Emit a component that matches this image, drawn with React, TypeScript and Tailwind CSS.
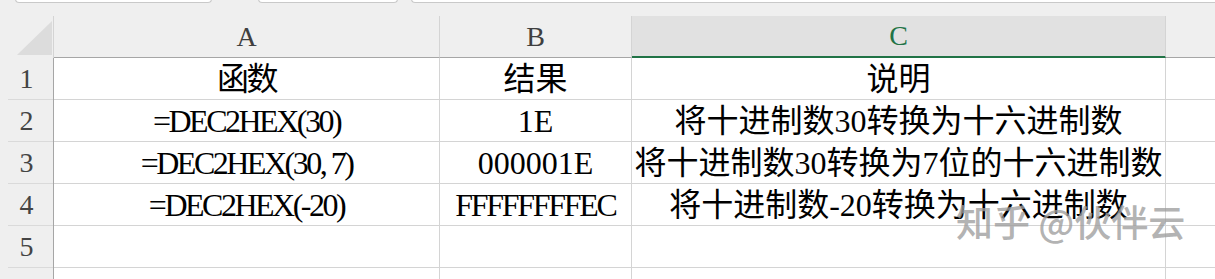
const rows: { a: string; b: string; c: string }[] = [
  { a: "函数", b: "结果", c: "说明" },
  { a: "=DEC2HEX(30)", b: "1E", c: "将十进制数30转换为十六进制数" },
  { a: "=DEC2HEX(30, 7)", b: "000001E", c: "将十进制数30转换为7位的十六进制数" },
  { a: "=DEC2HEX(-20)", b: "FFFFFFFFEC", c: "将十进制数-20转换为十六进制数" },
  { a: "", b: "", c: "" },
  { a: "", b: "", c: "" },
];

const grid = "grid grid-cols-[54px_386px_192px_534px_1fr]";
const cell =
  "h-[42px] border-r border-b border-[#d4d4d4] flex items-center justify-center whitespace-nowrap text-[32px] leading-[42px] text-black";

export default function App() {
  return (
    <div className="relative w-[1215px] h-[279px] overflow-hidden bg-[#efefef] font-['Liberation_Serif','Noto_Sans_CJK_SC',serif]">
      {/* formula bar edges */}
      <div className="flex h-[16px] items-start">
        <div className="ml-[15px] w-[197px] h-[4px] -mt-px bg-white border border-t-0 border-[#c9c9c9] rounded-b-[5px]" />
        <div className="ml-[46px] w-[140px] h-[4px] -mt-px bg-white border border-t-0 border-[#c9c9c9] rounded-b-[5px]" />
        <div className="ml-[13px] flex-1 h-[4px] -mt-px bg-white border border-t-0 border-r-0 border-[#c9c9c9] rounded-bl-[5px]" />
      </div>

      {/* column headers */}
      <div className={`${grid} h-[42px] text-[28px] leading-none`}>
        <div className="relative border-r border-[#d4d4d4]">
          <div className="absolute left-[17px] top-[5px] w-0 h-0 border-l-[35px] border-l-transparent border-b-[34px] border-b-[#dcdcdc]" />
        </div>
        <div className="flex items-center justify-center border-r border-b border-r-[#d4d4d4] border-b-[#a6a6a6] text-[#3f3f3f]">
          A
        </div>
        <div className="flex items-center justify-center border-r border-b border-r-[#d4d4d4] border-b-[#a6a6a6] text-[#3f3f3f]">
          B
        </div>
        <div className="flex items-center justify-center bg-[#e1e1e1] border-r border-[#d4d4d4] border-b-[2px] border-b-[#217346] text-[#217346]">
          C
        </div>
        <div className="border-b border-[#a6a6a6]" />
      </div>

      {/* body */}
      {rows.map((r, i) => (
        <div key={i} className={grid}>
          <div className="h-[42px] bg-[#efefef] border-r border-[#a6a6a6]">
            <div className="ml-2 h-full border-b border-[#dadada] pr-2 flex items-center justify-center text-[28px] leading-none text-[#444]">
              {i < 5 ? i + 1 : ""}
            </div>
          </div>
          <div className={`${cell} bg-white tracking-[-2.5px]`}>{r.a}</div>
          <div className={`${cell} bg-white ${r.b.length > 8 ? "tracking-[-2.3px]" : ""}`}>{r.b}</div>
          <div className={`${cell} bg-white`}>{r.c}</div>
          <div className={`${cell} bg-white border-r-0`} />
        </div>
      ))}

      {/* watermark */}
      <div className="absolute left-[956px] top-[203px] text-[37px] leading-none font-['Noto_Sans_CJK_SC',sans-serif] font-medium text-[#9e9e9e]/80 whitespace-nowrap">
        知乎 @伙伴云
      </div>
    </div>
  );
}
